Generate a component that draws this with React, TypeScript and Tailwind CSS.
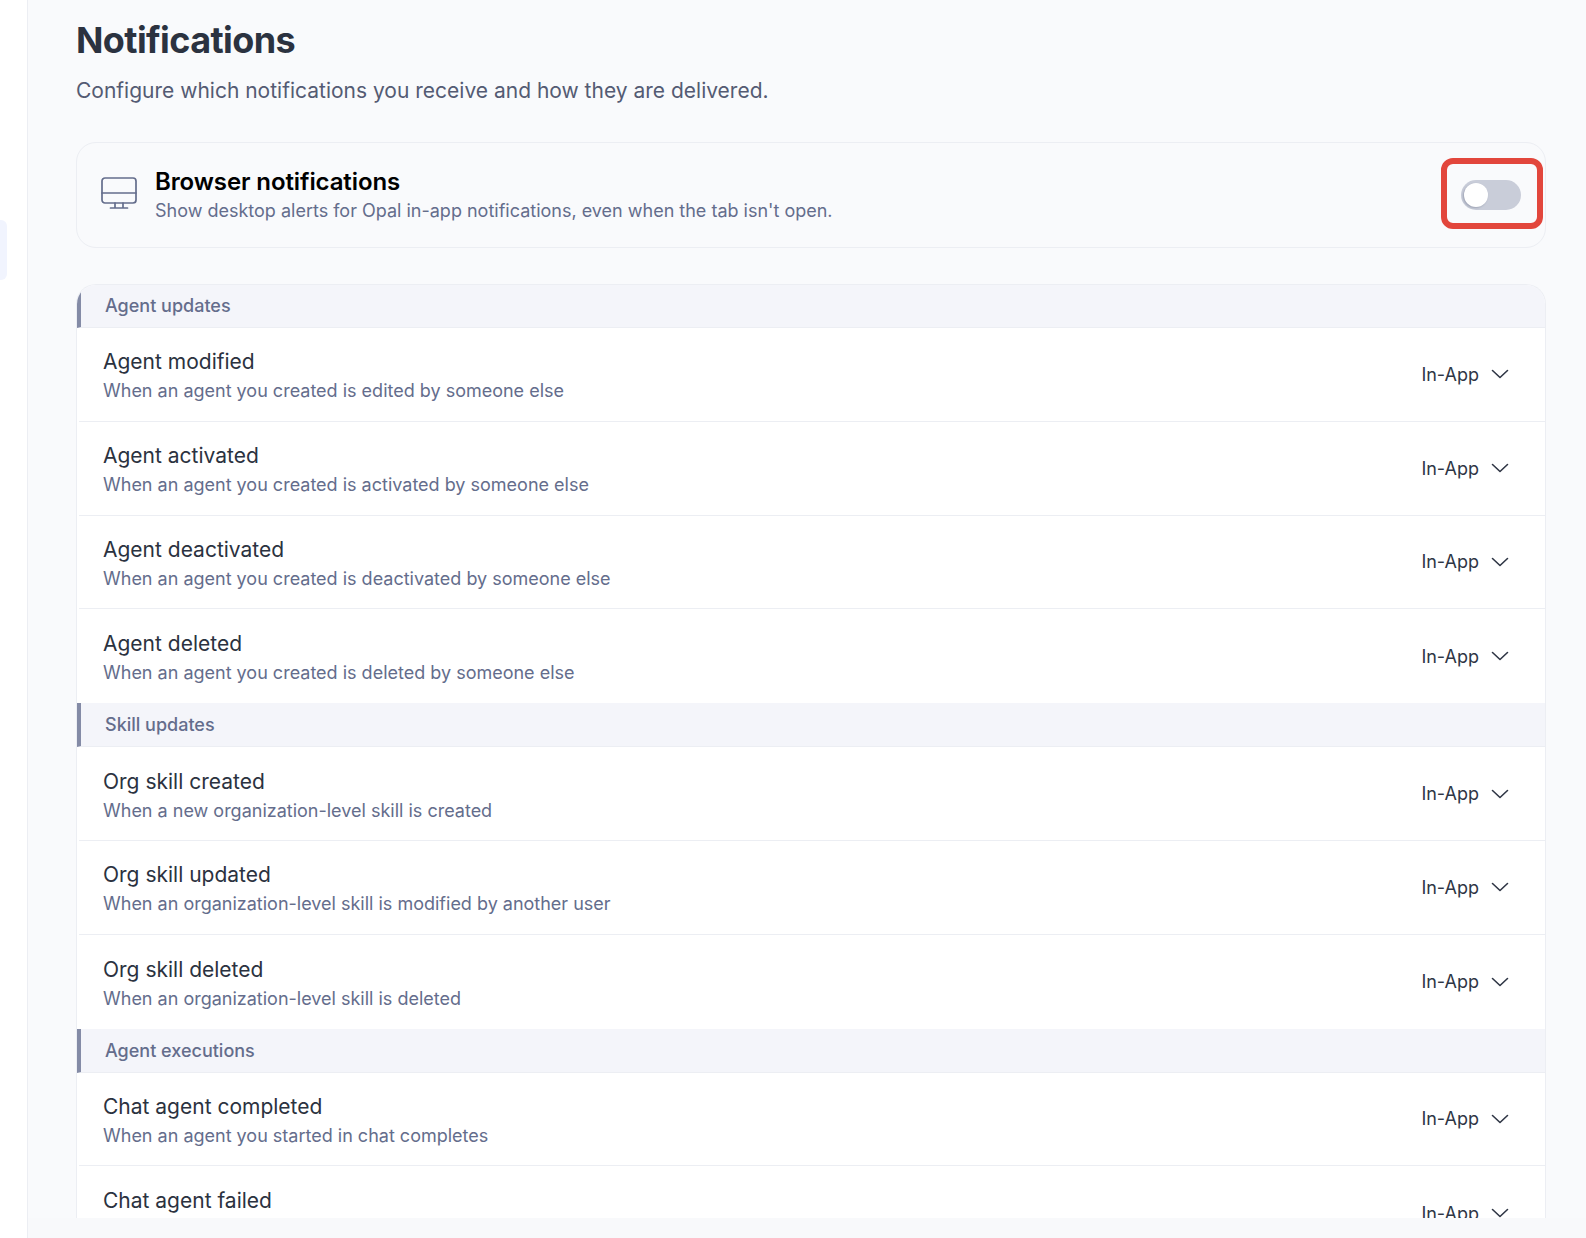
import React from "react";

const font = { fontFamily: "Inter, 'Liberation Sans', sans-serif" };

type Row = { t: string; d: string };
const groups: { h: string; rows: Row[] }[] = [
  {
    h: "Agent updates",
    rows: [
      { t: "Agent modified", d: "When an agent you created is edited by someone else" },
      { t: "Agent activated", d: "When an agent you created is activated by someone else" },
      { t: "Agent deactivated", d: "When an agent you created is deactivated by someone else" },
      { t: "Agent deleted", d: "When an agent you created is deleted by someone else" },
    ],
  },
  {
    h: "Skill updates",
    rows: [
      { t: "Org skill created", d: "When a new organization-level skill is created" },
      { t: "Org skill updated", d: "When an organization-level skill is modified by another user" },
      { t: "Org skill deleted", d: "When an organization-level skill is deleted" },
    ],
  },
  {
    h: "Agent executions",
    rows: [
      { t: "Chat agent completed", d: "When an agent you started in chat completes" },
      { t: "Chat agent failed", d: "When an agent you started in chat fails" },
    ],
  },
];

function Chevron() {
  return (
    <svg width="18" height="10" viewBox="0 0 18 10" fill="none" stroke="#2f3645" strokeWidth="1.6" strokeLinecap="round" strokeLinejoin="round">
      <path d="M1.5 1.5 9 8.5l7.5-7" />
    </svg>
  );
}

function Monitor() {
  return (
    <svg className="mb-[5px]" width="36" height="32" viewBox="0 0 36 32" fill="none" stroke="#646d8c" strokeWidth="1.7" strokeLinecap="round" strokeLinejoin="round">
      <rect x="1" y="1" width="34" height="25" rx="3" />
      <path d="M1 16h34M14 26v5M22 26v5M9.5 31h17" />
    </svg>
  );
}

export default function App() {
  return (
    <div className="flex h-[1238px] w-full overflow-hidden bg-[#f8f9fb]" style={font}>
      <aside className="w-[28px] shrink-0 border-r border-[#eceef3] bg-white pt-[220px]">
        <div className="h-[60px] w-[7px] rounded-r-[6px] bg-[#f1f4fe]" />
      </aside>
      <main className="h-[1218px] flex-1 overflow-hidden bg-[#f9fafc] pl-[48px] pr-[40px]">
        <h1 className="mt-[16px] text-[36px] font-bold leading-[48px] tracking-[-0.6px] text-[#2b3240]">Notifications</h1>
        <p className="mt-[13px] text-[21px] leading-[28px] text-[#545b73]">
          Configure which notifications you receive and how they are delivered.
        </p>
        <section className="mt-[37px] flex h-[106px] items-center rounded-[20px] border border-[#eceef3] pl-[24px] pr-[24px]">
          <Monitor />
          <div className="ml-[18px] flex-1">
            <div className="text-[24px] font-semibold leading-[30px] tracking-[-0.1px] text-black">Browser notifications</div>
            <div className="text-[18px] leading-[27px] text-[#646d8c]">
              Show desktop alerts for Opal in-app notifications, even when the tab isn't open.
            </div>
          </div>
          <div className="mb-[4px] mr-[-22px] flex h-[71px] w-[102px] items-center justify-center rounded-[12px] border-[6px] border-[#e2463c]">
            <div className="mr-[2px] mt-[4px] flex h-[30px] w-[60px] items-center rounded-full bg-[#c9cdd9] pl-[3px]">
              <div className="h-[24px] w-[24px] rounded-full bg-white shadow-[-1px_1px_2px_rgba(60,70,100,0.3)]" />
            </div>
          </div>
        </section>
        <section className="mt-[36px] overflow-hidden rounded-t-[20px] border-x border-t border-[#eceef3] bg-white">
          {groups.map((g, gi) => (
            <div key={g.h}>
              <div
                className={`flex items-center border-b border-[#eceef3] border-l-[4px] border-l-[#848ba6] bg-[#f4f5fa] pl-[24px] text-[18px] font-medium text-[#646d8c] ${gi === 0 ? "h-[43px] pb-[2px]" : "h-[44px]"}`}
              >
                {g.h}
              </div>
              {g.rows.map((r, i) => (
                <div
                  key={r.t}
                  className={`ml-[2px] flex h-[93.8px] items-center justify-between pl-[24px] pr-[36px] ${i < g.rows.length - 1 ? "border-b border-[#eceef3]" : ""}`}
                >
                  <div className="pt-[4px]">
                    <div className="text-[21px] leading-[30px] text-[#2b3240]">{r.t}</div>
                    <div className="text-[18px] leading-[28px] text-[#646d8c]">{r.d}</div>
                  </div>
                  <div className="flex items-center gap-[12px] text-[18px] text-[#2f3645]">
                    <span>In-App</span>
                    <Chevron />
                  </div>
                </div>
              ))}
            </div>
          ))}
        </section>
      </main>
    </div>
  );
}
